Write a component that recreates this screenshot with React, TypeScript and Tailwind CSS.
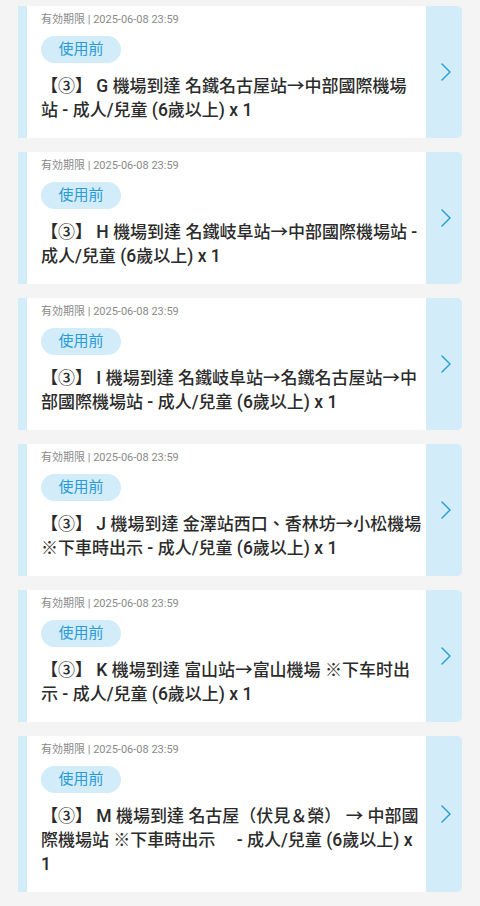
const tickets = [
  '【③】 G 機場到達 名鐵名古屋站→中部國際機場站 - 成人/兒童 (6歲以上) x 1',
  '【③】 H 機場到達 名鐵岐阜站→中部國際機場站 - 成人/兒童 (6歲以上) x 1',
  '【③】 I 機場到達 名鐵岐阜站→名鐵名古屋站→中部國際機場站 - 成人/兒童 (6歲以上) x 1',
  '【③】 J 機場到達 金澤站西口、香林坊→小松機場 ※下車時出示 - 成人/兒童 (6歲以上) x 1',
  '【③】 K 機場到達 富山站→富山機場 ※下车时出示 - 成人/兒童 (6歲以上) x 1',
  '【③】 M 機場到達 名古屋（伏見＆榮） → 中部國際機場站 ※下車時出示\u3000 - 成人/兒童 (6歲以上) x 1',
];

// latin runs render a bit larger than the CJK glyphs, like the app does
function Title({ text }: { text: string }) {
  const parts = text.split(/([\x20-\x7e→]+)/);
  return (
    <p className="mt-[11px] text-[17px] leading-6 font-medium text-[#2b2b2b] whitespace-pre-wrap">
      {parts.map((p, i) =>
        /^[\x20-\x7e→]+$/.test(p) ? (
          <span key={i} className="text-[17.5px] leading-none">
            {p}
          </span>
        ) : (
          <span key={i} className="leading-none">
            {p}
          </span>
        )
      )}
    </p>
  );
}

function Chevron() {
  return (
    <svg width="12" height="18" viewBox="0 0 12 18" fill="none">
      <polyline points="2,1 10,9 2,17" stroke="#2a9fd8" strokeWidth="1.5" strokeLinecap="round" strokeLinejoin="round" />
    </svg>
  );
}

function TicketCard({ title }: { title: string }) {
  return (
    <div className="flex rounded-r-[5px] overflow-hidden">
      <div className="w-[9px] shrink-0 bg-[#d3ecf9]" />
      <div className="flex-1 min-w-0 bg-white pl-[14px] pr-[3px] pt-[6px] pb-[16px]">
        <div className="text-[11px] leading-4 text-[#8a8a8a]">有効期限 | 2025-06-08 23:59</div>
        <div className="mt-[8px] flex h-[27px] w-[80px] items-center justify-center rounded-full bg-[#d3ecf9] text-[15px] text-[#2a9bd6]">
          使用前
        </div>
        <Title text={title} />
      </div>
      <div className="w-[36px] shrink-0 bg-[#d3ecf9] flex items-center justify-center pl-[3px]">
        <Chevron />
      </div>
    </div>
  );
}

export default function App() {
  return (
    <div
      className="min-h-[906px] bg-[#f4f4f4] px-[18px] pt-[6px] pb-4"
      style={{ fontFamily: "Roboto, 'Noto Sans CJK TC', sans-serif" }}
    >
      <div className="flex flex-col gap-[14px]">
        {tickets.map((t) => (
          <TicketCard key={t} title={t} />
        ))}
      </div>
    </div>
  );
}
